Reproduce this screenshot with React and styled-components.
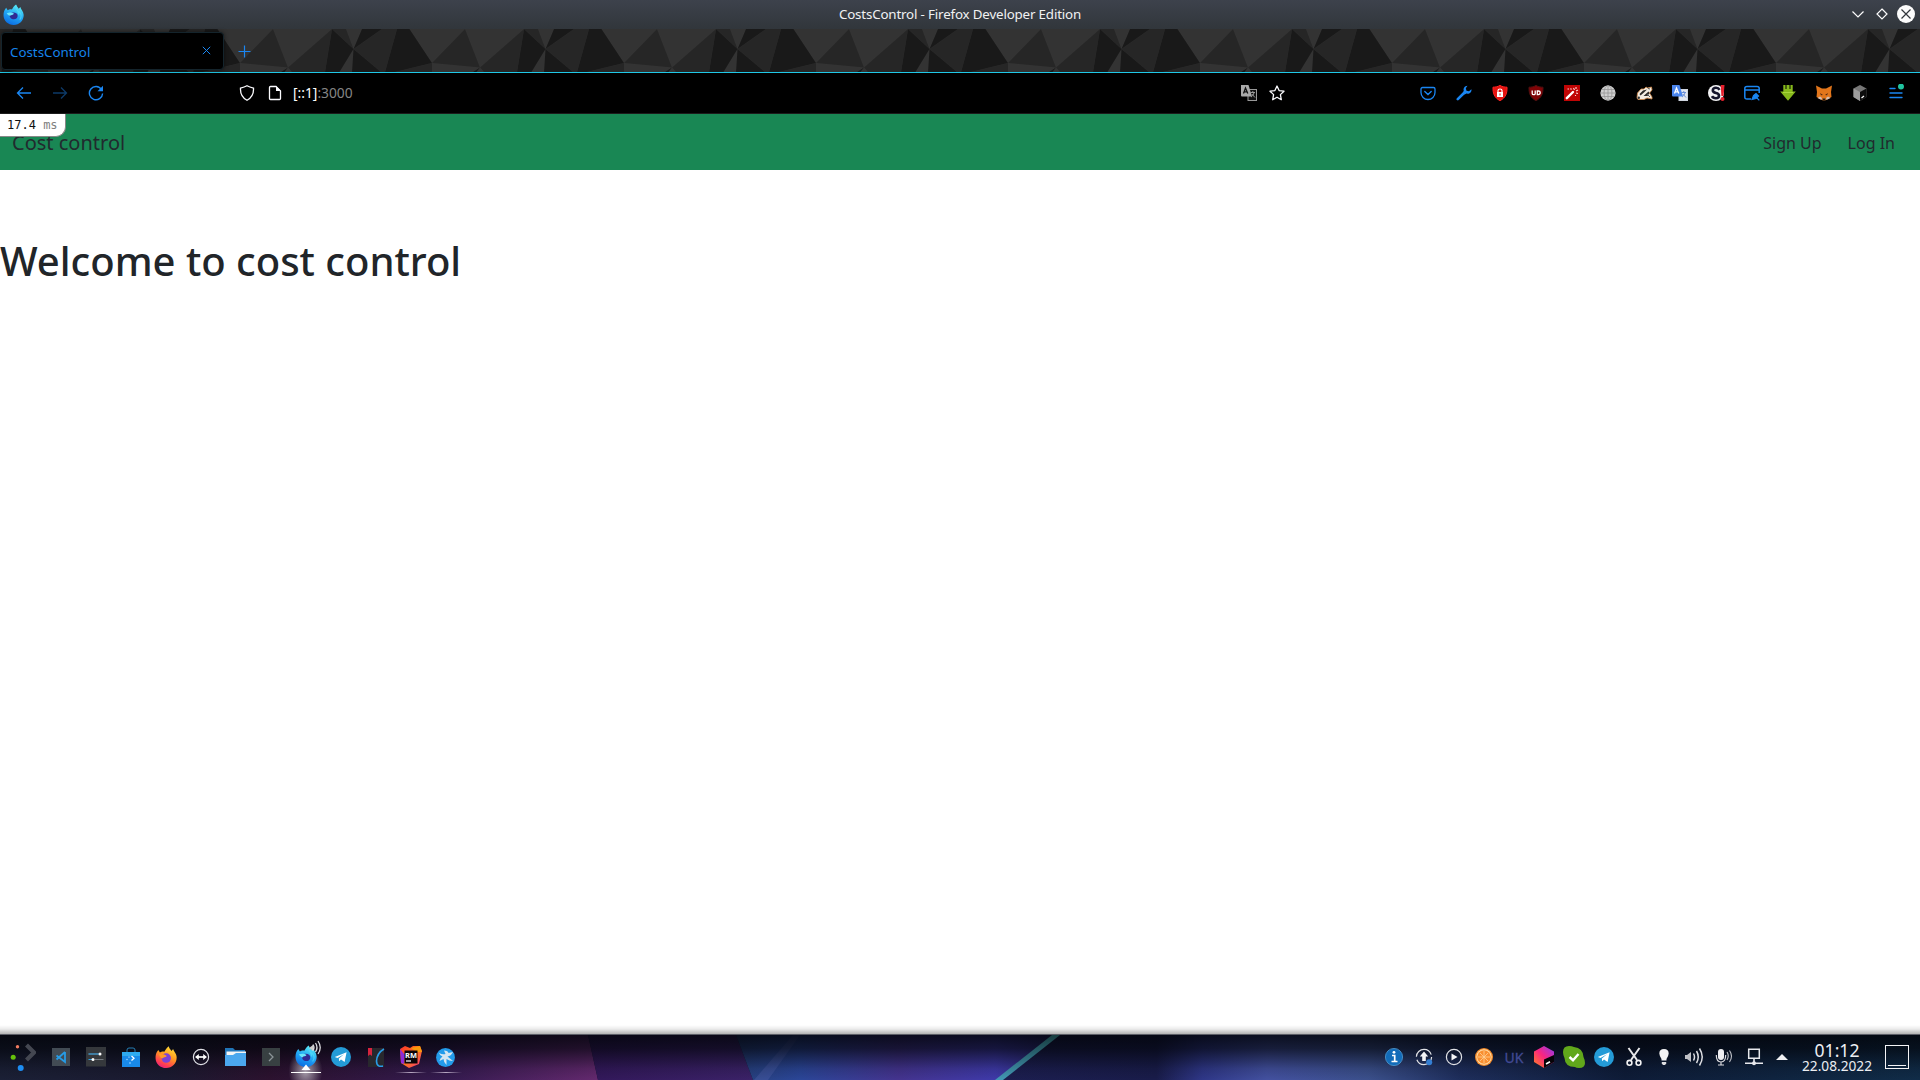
import React from "react";
import styled, { createGlobalStyle } from "styled-components";

const GlobalStyle = createGlobalStyle`
  * { box-sizing: border-box; }
  html, body { margin: 0; padding: 0; overflow: hidden; }
  body { font-family: "Noto Sans", sans-serif; background: #fff; }
  svg { display: block; }
`;

const Desktop = styled.div`
  width: 1920px;
  height: 1080px;
  display: flex;
  flex-direction: column;
  overflow: hidden;
`;

/* ---------- window title bar ---------- */
const TitleBar = styled.header`
  height: 29px;
  flex: none;
  display: grid;
  grid-template-columns: 120px 1fr 120px;
  align-items: center;
  background: linear-gradient(#3d424c, #31363b);
  color: #f0f1f2;
`;
const TitleIcon = styled.div`
  padding-left: 3px;
  margin-top: -1px;
`;
const Title = styled.div`
  text-align: center;
  font-size: 13.33px;
  letter-spacing: -0.16px;
  line-height: 26px;
  padding-bottom: 2px;
  white-space: nowrap;
`;
const WindowButtons = styled.div`
  display: flex;
  justify-content: flex-end;
  align-items: center;
  gap: 6px;
  padding-right: 5px;
  margin-top: -1px;
`;

/* ---------- tab strip ---------- */
const TabStrip = styled.div`
  position: relative;
  height: 44px;
  flex: none;
  display: flex;
  align-items: flex-start;
  padding: 3px 0 0 1px;
  border-bottom: 1px solid #1fc8e6;
  background: #333;
`;
const StripArt = styled.svg`
  position: absolute;
  inset: 0;
`;
const Tab = styled.div`
  position: relative;
  width: 223px;
  height: 38px;
  display: flex;
  align-items: center;
  justify-content: space-between;
  padding: 0 12px 1px 8px;
  border: 1px solid #14242c;
  border-radius: 4px;
  background: #000;
  box-shadow: 0 0 4px rgba(0, 0, 0, 0.5);
  color: #1583ea;
  font-size: 13.33px;
  line-height: 20px;
`;
const TabLabel = styled.span`
  padding-top: 3px;
`;
const NewTab = styled.div`
  position: relative;
  padding: 13px 0 0 14px;
`;

/* ---------- toolbar ---------- */
const Toolbar = styled.div`
  height: 41px;
  flex: none;
  display: flex;
  align-items: center;
  background: #000;
  border-bottom: 1px solid #1c1c1c;
`;
const Slot = styled.div`
  width: ${(p) => p.$w || 36}px;
  height: 100%;
  flex: none;
  display: flex;
  align-items: center;
  justify-content: center;
`;
const NavButtons = styled.div`
  display: flex;
  height: 100%;
  padding-left: 6px;
  width: 233px;
`;
const UrlBar = styled.div`
  display: flex;
  align-items: center;
  height: 100%;
  flex: 1;
`;
const Url = styled.div`
  flex: 1;
  padding-left: 4px;
  font-size: 13.8px;
  line-height: 20px;
  padding-bottom: 1px;
  color: #fff;
  span { color: #858585; }
`;
const Extensions = styled.div`
  display: flex;
  height: 100%;
  padding: 0 6px 0 119px;
`;

/* ---------- web page ---------- */
const Page = styled.main`
  position: relative;
  flex: 1;
  display: flex;
  flex-direction: column;
  background: #fff;
  &::after {
    content: "";
    position: absolute;
    left: 0;
    right: 0;
    bottom: 0;
    height: 9px;
    background: linear-gradient(rgba(0,0,0,0), rgba(0,0,0,0.08) 45%, rgba(0,0,0,0.3));
  }
`;
const Profiler = styled.div`
  position: absolute;
  top: 0;
  left: 0;
  width: 66px;
  height: 23px;
  padding-left: 7px;
  border: solid #888;
  border-width: 0 1px 1px 0;
  border-radius: 0 0 10px 0;
  background: #fff;
  color: #111;
  font: 12px/22px "DejaVu Sans Mono", monospace;
  white-space: pre;
  span { color: #808080; }
`;
const Navbar = styled.nav`
  height: 56px;
  display: flex;
  align-items: center;
  justify-content: space-between;
  padding: 2px 25px 0 12px;
  background: #198754;
  color: #212a2e;
`;
const Brand = styled.a`
  font-size: 20px;
  line-height: 30px;
`;
const NavLinks = styled.div`
  display: flex;
  gap: 26px;
  font-size: 16px;
  line-height: 24px;
`;
const Heading = styled.h1`
  margin: 67px 0 0;
  font-size: 40px;
  font-weight: 500;
  line-height: 48px;
  color: #212529;
`;

/* ---------- taskbar ---------- */
const Taskbar = styled.footer`
  position: relative;
  height: 46px;
  flex: none;
  display: flex;
  align-items: stretch;
  justify-content: space-between;
  border-top: 1px solid #5b5d66;
  background: #0e1226;
`;
const Wallpaper = styled.svg`
  position: absolute;
  inset: 0;
`;
const Launchers = styled.div`
  position: relative;
  display: flex;
  padding-left: 1px;
`;
const Task = styled.div`
  width: ${(p) => p.$w || 35}px;
  display: flex;
  align-items: center;
  justify-content: center;
  padding-bottom: 1px;
  background: ${(p) =>
    p.$active
      ? "radial-gradient(ellipse 17px 22px at 50% 80%, rgba(255,255,255,.6), rgba(255,255,255,0)), linear-gradient(#fff,#fff) 50% 37px / 30px 1px no-repeat"
      : p.$open
      ? "linear-gradient(90deg, transparent, #b9a9c4, transparent) 50% 37px / 32px 1px no-repeat"
      : "none"};
`;
const Tray = styled.div`
  position: relative;
  display: flex;
`;
const TrayItem = styled.div`
  width: 30px;
  display: flex;
  align-items: center;
  justify-content: center;
  padding-bottom: 1px;
  &:nth-child(14) { width: 26px; }
`;
const Layout = styled.span`
  color: #424a94;
  font: 14px "Noto Sans", sans-serif;
  -webkit-text-stroke: 0.3px #424a94;
`;
const Clock = styled.div`
  width: 84px;
  display: flex;
  flex-direction: column;
  align-items: center;
  padding-top: 6px;
  color: #eceef2;
  white-space: nowrap;
`;
const Time = styled.span`
  font-size: 17.6px;
  line-height: 18px;
`;
const DateText = styled.span`
  font-size: 13.7px;
  line-height: 14px;
`;
const ShowDesktop = styled.div`
  margin: 10px 11px 0 6px;
  width: 24px;
  height: 24px;
  border: 1px solid #f4f4f6;
  display: flex;
  align-items: flex-end;
  padding: 2px;
  &::after {
    content: "";
    height: 1px;
    flex: 1;
    background: #f4f4f6;
  }
`;

const BLUE = "#1a86f2";
const Svg = ({ w = 16, h, box, children, ...rest }) => (
  <svg width={w} height={h || w} viewBox={box || `0 0 ${w} ${h || w}`} fill="none" {...rest}>
    {children}
  </svg>
);

const FoxDev = ({ size = 20 }) => (
  <Svg w={size} box="0 0 20 20">
    <defs>
      <linearGradient id="fd" x1="0.7" y1="0" x2="0.3" y2="1">
        <stop offset="0" stopColor="#5cf0f5" />
        <stop offset=".5" stopColor="#22a7f4" />
        <stop offset="1" stopColor="#0a6be2" />
      </linearGradient>
    </defs>
    <path d="M2 5L3 3.600L4.500 6C6 5 7 5 8.500 5.200C9.500 4 10 2 12.500 0.500C12.700 2 14 3 15 4.500L16.500 2.800C17 5 19.500 7 19.700 10.500C19.700 16 15.500 20 10.200 20C4.800 20 .5 16 .5 10.800C.5 8.500 1 6.500 2 5Z" fill="url(#fd)" />
    <path d="M6 9C8 8 11 7.500 13 9C15 11 13.500 14.500 10.500 14.500C7.500 14.500 6 12.500 6 9Z" fill="#302a93" />
    <path d="M3.500 8.700C6 7.500 9 8 10.500 9.200C9.500 10.800 7.800 10 6.700 11.300C5.500 11 4.500 10 3.500 8.700Z" fill="#6ee6fa" />
    <path d="M12.500 1C11 4 14.500 6 15 9.500C15.500 8.500 15.300 7.500 15 6.800C17.500 9 18 12 16 15" stroke="#54dcf6" strokeWidth="1" opacity=".7" />
  </Svg>
);
const Firefox = () => (
  <Svg w={22} box="0 0 20 20">
    <defs>
      <linearGradient id="fx" x1=".8" y1="0" x2=".3" y2="1">
        <stop offset="0" stopColor="#ffe53b" />
        <stop offset=".45" stopColor="#ff9a1f" />
        <stop offset=".8" stopColor="#ff4150" />
        <stop offset="1" stopColor="#e8207a" />
      </linearGradient>
    </defs>
    <path d="M2 5L3 3.600L4.500 6C6 5 7 5 8.500 5.200C9.500 4 10 2 12.500 0.200C12.700 2 14 3 15 4.500L16.500 2.800C17 5 19.700 7 19.700 10.500C19.700 16 15.500 20 10.200 20C4.800 20 .5 16 .5 10.800C.5 8.500 1 6.500 2 5Z" fill="url(#fx)" />
    <circle cx="10.200" cy="11" r="4.300" fill="#7c42d6" />
    <path d="M3.500 7.500C6 6.700 9 7.500 10.800 9C9.500 10.500 7.800 10 6.500 11.300C5 11 4.500 9.500 3.500 7.500Z" fill="#ff9a28" />
  </Svg>
);
const Telegram = ({ size = 20 }) => (
  <Svg w={size} box="0 0 20 20">
    <circle cx="10" cy="10" r="10" fill="#249bd7" />
    <path d="M3.800 10L15.600 5.200L13.600 15L10 12.500L8.200 14.200L7.800 11.600L13 7.200L6.500 11Z" fill="#fff" />
  </Svg>
);
const GTranslate = ({ mono }) => (
  <Svg w={16}>
    <rect x="7" y="4.500" width="8.500" height="11" fill={mono ? "#111" : "#e4e8ef"} stroke={mono ? "#999" : "#cfd5df"} />
    <path d="M0 0H7.500L11 11.500H1Q0 11.500 0 10.500Z" fill={mono ? "#a9a9a9" : "#4b86ee"} />
    <path d="M2.500 8.500L4.500 3L6.800 8.500M3.200 6.800H6" stroke={mono ? "#111" : "#fff"} strokeWidth="1.300" />
    <path d="M9.500 7.500H14M11.800 6V7.500M13 7.500C12.500 10 11.500 11 10 12M10.800 9L14 12.500" stroke={mono ? "#999" : "#6b8fd6"} />
  </Svg>
);
const Shield = ({ fill, stroke, children }) => (
  <Svg w={16}>
    <path d="M8 .4C10 1.600 12.500 2.200 15 2.200C15.200 8 14 12.500 8 15.700C2 12.500 .8 8 1 2.200C3.500 2.200 6 1.600 8 .4Z" fill={fill} stroke={stroke} />
    {children}
  </Svg>
);

const extensions = [
  <Svg w={16}><path d="M2.600 2.500H13.400Q15 2.500 15 4V7.500A7 7 0 0 1 1 7.500V4Q1 2.500 2.600 2.500Z" stroke={BLUE} strokeWidth="1.300" /><path d="M4.800 6.500L8 9.500L11.200 6.500" stroke={BLUE} strokeWidth="1.400" strokeLinecap="round" /></Svg>,
  <Svg w={16}><path d="M1.800 14.200L9 7" stroke={BLUE} strokeWidth="2.600" strokeLinecap="round" /><path d="M11.500 .8C8.500 1 7 3.500 7.800 6L7 8L8.500 9.500L10.500 8.600C13.500 9.200 16 7 15.400 4.200L13 6.300L10.500 5.700L9.800 3.300Z" fill={BLUE} /></Svg>,
  <Shield fill="#e5130f" stroke="#f22"><rect x="5" y="7" width="6" height="5" fill="#fff" /><path d="M6 7V5.500Q6 4 8 4Q10 4 10 5.500V7" stroke="#fff" strokeWidth="1.200" /><path d="M8 8.500V10.500" stroke="#e5130f" /></Shield>,
  <Shield fill="#800306" stroke="#4d1010"><path d="M4.200 5.500V8.500Q4.200 9.700 5.700 9.700Q7.200 9.700 7.200 8.500V5.500" stroke="#fff" strokeWidth="1.300" /><path d="M9.300 6H10.200Q12.200 6 12.200 7.800Q12.200 9.600 10.200 9.600H9.300Z" stroke="#fff" strokeWidth="1.300" /></Shield>,
  <Svg w={16}><path d="M0 0H16V16H0Z" fill="#c00505" /><path d="M2.800 13.200L9 7" stroke="#fff" strokeWidth="2.400" strokeLinecap="round" /><path d="M9.500 3L10.500 5M12 2V4M14 5L12 6M12 8L14 8.500M6.500 3.500L7.500 4.500M3.500 4H5M11.500 10V11" stroke="#ffd3d3" strokeWidth="1.100" /></Svg>,
  <Svg w={16}><circle cx="8" cy="8" r="7.600" fill="#cfcfcf" /><path d="M8 .5V15.500M.5 8H15.500M2 4.500H14M2 11.500H14" stroke="#969696" strokeWidth=".8" /><ellipse cx="8" cy="8" rx="4" ry="7.500" stroke="#969696" strokeWidth=".8" /></Svg>,
  <Svg w={17} h={16}><path d="M1 13L1.500 8L5 4L8 4L10 2L11.500 3L15.500 2L16 5L13.500 8L16 12V14L11 13L8 14.500L2 14.500Z" fill="#f2ece2" stroke="#d28a4b" strokeWidth=".8" /><path d="M3.500 9L7 5.500L11 4.500L8 7.500L4.500 10.500ZM7.500 11L12.500 6.500L13.500 8L11.500 11Z" fill="#2b2927" /><path d="M11 9L14 12M12 3.500L14 4" stroke="#555" /><circle cx="2.800" cy="12.800" r="1.200" fill="#333" /></Svg>,
  <GTranslate />,
  <Svg w={17} h={16}><circle cx="8" cy="8" r="8" fill="#f2f2f4" /><path d="M11.500 4.800Q10.500 2.800 8 2.800Q4.800 2.800 4.800 5.300Q4.800 7.300 8 8Q11 8.600 11 10.700Q11 13.200 7.800 13.200Q5 13.200 4 11.200" stroke="#15152c" strokeWidth="2.600" /><path d="M12.700 0H16.500L15.600 11H13.400Z" fill="#e5202d" /><circle cx="14.500" cy="14" r="2" fill="#e5202d" /></Svg>,
  <Svg w={16}><path d="M7 14H3Q.8 14 .8 12V3.500Q.8 1.500 3 1.500H13Q15.200 1.500 15.200 3.500V8M1 5H15" stroke={BLUE} strokeWidth="1.500" /><path d="M8 14.500L9.500 10.500L12 8.500L14.500 11L12 13.500ZM13 13L15.300 15.300" fill={BLUE} stroke={BLUE} strokeWidth="1.200" /></Svg>,
  <Svg w={16}><path d="M3.300 0H5.500V4H6.500V0H9.500V4H10.500V0H12.700V6.500H15.800L8 15.800L.2 6.500H3.300Z" fill="#86b81c" /><path d="M3 7.500H13" stroke="#a9d63c" /></Svg>,
  <Svg w={16}><path d="M0 .5L6 3.500H10L16 .5L15 7L15.500 12L11 14.500L9 15.500H7L5 14.500L.5 12L1 7Z" fill="#e2761b" /><path d="M1.500 13L4 11.500L6 13L5.500 15ZM14.500 13L12 11.500L10 13L10.500 15Z" fill="#d6bfb2" /><path d="M4 8L7 10L5 10.300ZM12 8L9 10L11 10.300Z" fill="#4a2512" /><path d="M6.500 13.500H9.500L9 15.500H7Z" fill="#222" /></Svg>,
  <Svg w={16}><path d="M8 0L14.500 3.500V12L8 16L1.500 12V3.500Z" fill="#777" /><path d="M1.500 3.500L8 7V16L1.500 12Z" fill="#9c9c9c" /><path d="M8 7L14.500 3.500V12L8 16Z" fill="#0c0c0c" /><path d="M9.500 13L12 11" stroke="#fff" strokeWidth="1.200" /></Svg>,
  <Svg w={18} h={18}><path d="M3 4.500H8M3 9H15M3 13.500H15" stroke={BLUE} strokeWidth="1.400" strokeLinecap="round" /><circle cx="14" cy="2.600" r="3" fill="#20c4a0" /></Svg>,
];

const arcs = (x, y) => (
  <g stroke="#d8d8dc" strokeWidth="1.300">
    <path d={`M${x} ${y - 3}Q${x + 2} ${y} ${x} ${y + 3}`} />
    <path d={`M${x + 2.5} ${y - 4.5}Q${x + 5.5} ${y} ${x + 2.5} ${y + 4.5}`} />
    <path d={`M${x + 5} ${y - 6.5}Q${x + 9.5} ${y} ${x + 5} ${y + 6.5}`} />
  </g>
);

const tasks = [
  { w: 42, icon: <Svg w={28} h={28}><circle cx="9.500" cy="3.800" r="1.700" fill="#f27c61" /><circle cx="5.200" cy="14.200" r="2.500" fill="#66c10b" /><circle cx="12.700" cy="25" r="3" fill="#1d8df2" /><path d="M18.500 2L26 9.500L18.500 17" stroke="#444751" strokeWidth="4.200" /></Svg> },
  { icon: <Svg w={18}><path d="M0 0H18V18H0Z" fill="#424b54" /><path d="M13 4V14L4.500 7.500M13 4L4.500 11.500" stroke="#279be5" strokeWidth="1.800" /></Svg> },
  { icon: <Svg w={20}><path d="M0 0H20V19.500H0Z" fill="#35383c" /><path d="M2.500 7H12M9 12.500H17.500" stroke="#747a80" strokeWidth="1.200" /><path d="M2.500 7H13M2.500 12.500H7" stroke="#2ba0e3" strokeWidth="1.200" /><circle cx="14" cy="7" r="1.500" fill="#fff" /><circle cx="7" cy="12.500" r="1.500" fill="#fff" /></Svg> },
  { icon: <Svg w={18} h={20}><path d="M5 5V3Q5 1 7 1H11Q13 1 13 3V5" stroke="#247db2" /><path d="M0 5H18V20H0Z" fill="#198ae9" /><path d="M0 5H18V9H0Z" fill="#3abcf5" opacity=".65" /><path d="M9.500 9L12 11.300L9.500 13.600" stroke="#fff" strokeWidth="1.300" /><circle cx="7" cy="10" r=".6" fill="#fff" /><circle cx="5" cy="12.500" r=".8" fill="#9ed5ff" /><circle cx="8" cy="16" r=".9" fill="#78c4ff" /></Svg> },
  { icon: <Firefox /> },
  { icon: <Svg w={18}><circle cx="9" cy="9" r="7.600" stroke="#dfdfe5" strokeWidth="1.200" /><path d="M5 9H13" stroke="#fff" strokeWidth="1.700" /><path d="M3 9L6.800 6V12ZM15 9L11.200 6V12Z" fill="#fff" /></Svg> },
  { icon: <Svg w={21} h={18}><path d="M0 0H8L10 2H20V10H0Z" fill="#2175b8" /><path d="M1.500 3.500H21V10H1.500Z" fill="#f4f5f6" /><path d="M0 7H8L11 5H21V18H0Z" fill="#4ba7ee" /></Svg> },
  { icon: <Svg w={18}><path d="M0 0H18V18H0Z" fill="#384042" /><path d="M7 5L11 9L7 13" stroke="#8b9498" strokeWidth="1.300" /></Svg> },
  { active: true, icon: <Svg w={34} h={40}><g transform="translate(6 8)"><FoxDev size={22} /></g><path d="M20 11L24 8V14Z" fill="#ccc" />{arcs(24, 10.5)}<path d="M17 27.500L21.500 33H12.500Z" fill="#fff" /></Svg> },
  { icon: <Telegram size={20} /> },
  { icon: <Svg w={18} h={19}><path d="M1 0H16Q17 0 17 1V19H1Z" fill="#28282d" /><path d="M1 0H5V8L3 6.500L1 8Z" fill="#d7243e" /><path d="M17 1Q10 5 9.500 13Q9.500 17 12 18Q14 18.500 16 18" stroke="#299ce6" strokeWidth="1.600" /></Svg> },
  { open: true, icon: <Svg w={22}><defs><linearGradient id="rm" x1="0" y1="0" x2="1" y2="1"><stop offset="0" stopColor="#ff3030" /><stop offset=".5" stopColor="#ff7a18" /><stop offset="1" stopColor="#f32d85" /></linearGradient></defs><path d="M0 3L5 0L10 2L13 0L20 0L22 5L19 18L9 22L1 17Z" fill="url(#rm)" /><path d="M0 3L5 9L4 18L1 17Z" fill="#8e2ad8" /><path d="M11 2L20 0L22 6L17 6Z" fill="#fa9a0c" /><path d="M4.500 4.500H17.500V17.500H4.500Z" fill="#0b0508" /><path d="M6 15H11" stroke="#fff" strokeWidth="1.200" /><text x="5" y="11.500" fontSize="7.500" fontWeight="700" fontFamily="Noto Sans" fill="#fff">RM</text></Svg> },
  { open: true, icon: <Svg w={19}><circle cx="9.500" cy="9.500" r="9.400" fill="#239bea" /><path d="M3 5Q7 7 9.500 6L8 2.500Q12 2.500 12.500 5L17 4Q15 8 11.500 8.500L17 13Q13 13 10.500 11L10.500 17Q7.500 14 7.500 11L3.500 13Q4 10 6.500 8.500Q4 8 3 5Z" fill="#d5e6f2" /></Svg> },
];

const tray = [
  <Svg w={18}><circle cx="9" cy="9" r="8.600" fill="#126cb9" stroke="#5199d0" strokeWidth=".8" /><path d="M7 7.500H9.700V13.500M6.500 13.500H12.500" stroke="#fff" strokeWidth="1.700" /><circle cx="9" cy="4.300" r="1.400" fill="#fff" /></Svg>,
  <Svg w={18}><circle cx="9" cy="9" r="7.600" stroke="#e1e2e6" strokeWidth="1.200" strokeDasharray="21 3" /><path d="M9 3.500L13.200 8.500H10.800V13H7.200V8.500H4.800Z" fill="#f4f4f6" /><circle cx="14.200" cy="14.200" r="3" fill="#347fd4" /></Svg>,
  <Svg w={18}><circle cx="9" cy="9" r="7.600" stroke="#e1e2e6" strokeWidth="1.200" /><path d="M6.500 5.500L12.500 9L6.500 12.500Z" fill="#f4f4f6" /></Svg>,
  <Svg w={18}><circle cx="9" cy="9" r="9" fill="#f48a28" /><circle cx="9" cy="9" r="7.700" fill="#ffe0ac" /><circle cx="9" cy="9" r="6.800" fill="#f98f30" /><path d="M9 3V15M3 9H15M4.800 4.800L13.200 13.200M13.200 4.800L4.800 13.200" stroke="#ffd297" strokeWidth=".8" /></Svg>,
  <Layout>UK</Layout>,
  <Svg w={20} h={22}><defs><linearGradient id="tb" x1="0" y1="1" x2="1" y2="0"><stop offset="0" stopColor="#ff851e" /><stop offset=".5" stopColor="#fa2580" /><stop offset="1" stopColor="#8c3cf4" /></linearGradient></defs><path d="M10 0L20 5.500V16L10 22L0 16V5.500Z" fill="url(#tb)" /><path d="M10 13.500L20 9V16L10 22Z" fill="#070308" /><path d="M12 18L16 15.700" stroke="#fff" strokeWidth="1.600" /></Svg>,
  <Svg w={22}><path d="M6 0Q9 0 11 1Q20 2 20.500 11Q22 14 22 17Q22 22 16 22Q13 22 12 21Q2 21 1.500 12Q0 9 0 6Q0 0 6 0Z" fill="#61a81b" /><path d="M6.500 11L10 14.200L15.500 8" stroke="#fff" strokeWidth="2.400" /></Svg>,
  <Telegram size={20} />,
  <Svg w={18} h={20}><path d="M3.500 1L12 13M14.500 1L6 13" stroke="#e8e8ea" strokeWidth="2" /><circle cx="4.500" cy="15.800" r="2.400" stroke="#f3f3f4" strokeWidth="1.600" /><circle cx="13.500" cy="15.800" r="2.400" stroke="#f3f3f4" strokeWidth="1.600" /></Svg>,
  <Svg w={12} h={18}><path d="M6 1Q10.700 1 10.700 5.500Q10.500 8 8.500 11V12.500H3.500V11Q1.500 8 1.300 5.500Q1.300 1 6 1Z" fill="#f3f3f5" /><path d="M3.800 14H8.200V15.500L7 17H5L3.800 15.500Z" fill="#dedee1" /></Svg>,
  <Svg w={20} h={20}><path d="M1 8H3L7 5V15L3 12H1Z" fill="#bfc0c5" /><g stroke="#dcdde1" strokeWidth="1.500"><path d="M9.500 6.500Q11.500 10 9.500 13.500M12.500 4Q16 10 12.500 16M15.500 1.500Q21 10 15.500 18.500" /></g></Svg>,
  <Svg w={18} h={18}><rect x="3" y="1" width="6" height="11" rx="3" fill="#eeeef1" /><path d="M1.300 7Q1.300 14 6 14Q10.700 14 10.700 7M6 14V17M3 17H9" stroke="#d9d9de" strokeWidth="1.200" /><path d="M12 4Q14.500 8 12 12M14.500 2.500Q18.500 8 14.500 14" stroke="#c2c3c9" strokeWidth="1.100" /></Svg>,
  <Svg w={18}><path d="M3.700 1.200H14.300V10.300H3.700Z" stroke="#e7e8ec" strokeWidth="1.500" /><path d="M9 10.500V15M0 15.300H18" stroke="#e7e8ec" strokeWidth="1.600" /><circle cx="9" cy="15.300" r="2" fill="#e7e8ec" /></Svg>,
  <Svg w={12} h={6}><path d="M0 6L6 0L12 6Z" fill="#f1f1f3" /></Svg>,
];

const ThemePattern = () => (
  <StripArt width="1920" height="43">
    <defs>
      <pattern id="tri" x="96" width="192" height="43" patternUnits="userSpaceOnUse">
        <path d="M0 38.500L44 0L37 43H4ZM44 0H58L65.500 20ZM94 0H109L97 43L65.500 20ZM65.500 20L97 43H93ZM144 34L177 0L192 38.500ZM107 43L144 34V43Z" fill="#262626" />
        <path d="M44 0L65.500 20L51.500 43H37ZM74 0H94L65.500 20ZM109 0H121.500L144 34L107 43H97ZM65.500 20L93 43H64ZM185 43L192 38.500L188.500 43Z" fill="#191919" />
      </pattern>
    </defs>
    <rect width="1920" height="43" fill="url(#tri)" />
  </StripArt>
);

const BarWallpaper = () => (
  <Wallpaper width="1920" height="45" viewBox="0 0 1920 45">
    <defs>
      <linearGradient id="w0"><stop offset="0" stopColor="#1b2036" /><stop offset=".28" stopColor="#1b1a30" /><stop offset=".45" stopColor="#2c122f" /><stop offset=".75" stopColor="#351b50" /><stop offset="1" stopColor="#64296f" /></linearGradient>
      <linearGradient id="w1"><stop offset="0" stopColor="#32185a" /><stop offset="1" stopColor="#3b2268" /></linearGradient>
      <linearGradient id="w2"><stop offset="0" stopColor="#26407c" /><stop offset=".2" stopColor="#2b4698" /><stop offset=".5" stopColor="#44348f" /><stop offset=".8" stopColor="#3f3aaa" /><stop offset="1" stopColor="#2a2870" /></linearGradient>
      <linearGradient id="w3"><stop offset="0" stopColor="#1c1e50" /><stop offset=".17" stopColor="#191c4a" /><stop offset=".22" stopColor="#2f3788" /><stop offset=".29" stopColor="#4351a0" /><stop offset=".4" stopColor="#3b508c" /><stop offset=".5" stopColor="#1e2e5c" /><stop offset=".68" stopColor="#0e1c38" /><stop offset="1" stopColor="#102c48" /></linearGradient>
      <linearGradient id="shade" x1="0" y1="0" x2="0" y2="1"><stop offset="0" stopColor="#02040a" stopOpacity=".85" /><stop offset=".3" stopColor="#02040a" stopOpacity=".68" /><stop offset=".75" stopColor="#02040a" stopOpacity=".15" /><stop offset="1" stopColor="#02040a" stopOpacity="0" /></linearGradient>
      <linearGradient id="beam" x1="0" y1="0" x2="0" y2="1"><stop offset="0" stopColor="#173c3f" /><stop offset="1" stopColor="#4398b5" /></linearGradient>
    </defs>
    <path d="M0 0H588L598 45H0Z" fill="url(#w0)" />
    <path d="M588 0H736L753 45H598Z" fill="url(#w1)" />
    <path d="M736 0H1060L1000 45H753Z" fill="url(#w2)" />
    <path d="M1060 0H1920V45H1000Z" fill="url(#w3)" />
    <path d="M793 0L754 45H768L800 0Z" fill="#5565b0" opacity=".35" />
    <rect width="1920" height="45" fill="url(#shade)" />
    <path d="M1052 0H1060L1003 45H995Z" fill="url(#beam)" />
  </Wallpaper>
);

export default function App() {
  return (
    <Desktop>
      <GlobalStyle />
      <TitleBar>
        <TitleIcon><FoxDev size={21} /></TitleIcon>
        <Title>CostsControl - Firefox Developer Edition</Title>
        <WindowButtons>
          <Svg w={18}><path d="M3.500 6.500L9 12L14.500 6.500" stroke="#fcfcfc" strokeWidth="1.200" /></Svg>
          <Svg w={18}><path d="M9 4L14 9L9 14L4 9Z" stroke="#fcfcfc" strokeWidth="1.200" /></Svg>
          <Svg w={18}><circle cx="9" cy="9" r="9" fill="#fcfcfc" /><path d="M4.500 4.500L13.500 13.500M13.500 4.500L4.500 13.500" stroke="#31363b" strokeWidth="1.200" /></Svg>
        </WindowButtons>
      </TitleBar>
      <TabStrip>
        <ThemePattern />
        <Tab>
          <TabLabel>CostsControl</TabLabel>
          <Svg w={9}><path d="M.8 .8L8.200 8.200M8.200 .8L.8 8.200" stroke={BLUE} strokeWidth="1" /></Svg>
        </Tab>
        <NewTab><Svg w={13}><path d="M6.500 .5V12.500M.5 6.500H12.500" stroke={BLUE} strokeWidth="1.200" /></Svg></NewTab>
      </TabStrip>
      <Toolbar>
        <NavButtons>
          <Slot><Svg w={16}><path d="M15 8H1.500M7 2.500L1.500 8L7 13.500" stroke={BLUE} strokeWidth="1.300" /></Svg></Slot>
          <Slot><Svg w={16}><path d="M1 8H14.500M9 2.500L14.500 8L9 13.500" stroke="#0d3a68" strokeWidth="1.300" /></Svg></Slot>
          <Slot><Svg w={16}><path d="M13.500 4.500A6.600 6.600 0 1 0 14.600 8.500" stroke={BLUE} strokeWidth="1.400" /><path d="M15 .8V6.300H9.500Z" fill={BLUE} /></Svg></Slot>
        </NavButtons>
        <UrlBar>
          <Slot $w={28}><Svg w={16}><path d="M8 .8C10 2 12 2.600 14.500 3.100C14.800 8 13 12.500 8 15.300C3 12.500 1.200 8 1.500 3.100C4 2.600 6 2 8 .8Z" stroke="#fbfbfe" strokeWidth="1.300" /></Svg></Slot>
          <Slot $w={28}><Svg w={16}><path d="M3.500 1.500H9L13.500 6V13.500Q13.500 14.500 12.500 14.500H3.500Q2.500 14.500 2.500 13.500V2.500Q2.500 1.500 3.500 1.500Z" stroke="#fbfbfe" strokeWidth="1.300" /><path d="M9 1V6H14Z" fill="#fbfbfe" /></Svg></Slot>
          <Url>[::1]<span>:3000</span></Url>
          <Slot $w={28}><GTranslate mono /></Slot>
          <Slot $w={28}><Svg w={16}><path d="M8 1L10.100 5.600L15 6.200L11.400 9.600L12.300 14.700L8 12.200L3.700 14.700L4.600 9.600L1 6.200L5.900 5.600Z" stroke="#fbfbfe" strokeWidth="1.300" strokeLinejoin="round" /></Svg></Slot>
        </UrlBar>
        <Extensions>
          {extensions.map((icon, i) => <Slot key={i}>{icon}</Slot>)}
        </Extensions>
      </Toolbar>
      <Page>
        <Navbar>
          <Brand>Cost control</Brand>
          <NavLinks><a>Sign Up</a><a>Log In</a></NavLinks>
        </Navbar>
        <Heading>Welcome to cost control</Heading>
        <Profiler>17.4 <span>ms</span></Profiler>
      </Page>
      <Taskbar>
        <BarWallpaper />
        <Launchers>
          {tasks.map((t, i) => <Task key={i} $w={t.w} $active={t.active} $open={t.open}>{t.icon}</Task>)}
        </Launchers>
        <Tray>
          {tray.map((icon, i) => <TrayItem key={i}>{icon}</TrayItem>)}
          <Clock><Time>01:12</Time><DateText>22.08.2022</DateText></Clock>
          <ShowDesktop />
        </Tray>
      </Taskbar>
    </Desktop>
  );
}
